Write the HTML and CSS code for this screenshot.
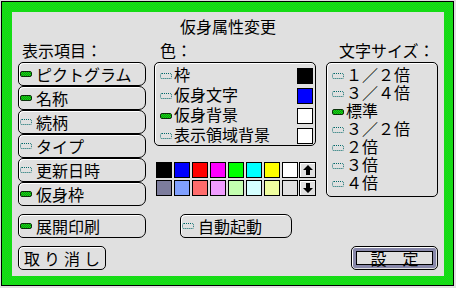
FILE: index.html
```html
<!DOCTYPE html>
<html>
<head>
    <title>仮身属性変更</title>
    <link rel="stylesheet" href="styles.css">
</head>
<body>

    <div class="window">
        <div class="content">
            <div class="title">仮身属性変更</div>
            <div class="columns">

                <div class="col col-left">
                    <div class="heading">表示項目：</div>
                    <div class="switch-stack">
                        <div class="switch"><span class="mark on"></span>ピクトグラム</div>
                        <div class="switch"><span class="mark on"></span>名称</div>
                        <div class="switch"><span class="mark"></span>続柄</div>
                        <div class="switch"><span class="mark"></span>タイプ</div>
                        <div class="switch"><span class="mark"></span>更新日時</div>
                        <div class="switch"><span class="mark on"></span>仮身枠</div>
                    </div>
                    <div class="switch switch-print"><span class="mark on"></span>展開印刷</div>
                    <div class="button button-cancel">取り消し</div>
                </div>

                <div class="col col-mid">
                    <div class="heading">色：</div>
                    <div class="panel color-panel">
                        <div class="color-row"><span class="mark"></span><span class="label">枠</span><span class="swatch" style="background:#000000"></span></div>
                        <div class="color-row"><span class="mark"></span><span class="label">仮身文字</span><span class="swatch" style="background:#0000ff"></span></div>
                        <div class="color-row"><span class="mark on"></span><span class="label">仮身背景</span><span class="swatch" style="background:#ffffff"></span></div>
                        <div class="color-row"><span class="mark"></span><span class="label">表示領域背景</span><span class="swatch" style="background:#ffffff"></span></div>
                    </div>
                    <div class="palette">
                        <span class="chip" style="background:#000000"></span>
                        <span class="chip" style="background:#0000ff"></span>
                        <span class="chip" style="background:#ff0000"></span>
                        <span class="chip" style="background:#ff00ff"></span>
                        <span class="chip" style="background:#00ff00"></span>
                        <span class="chip" style="background:#00ffff"></span>
                        <span class="chip" style="background:#ffff00"></span>
                        <span class="chip" style="background:#ffffff"></span>
                        <span class="arrow">
                            <svg width="14" height="14" viewBox="0 0 14 14"><path d="M7 2 L12 7 L9 7 L9 12 L5 12 L5 7 L2 7 Z" fill="#000"/></svg>
                        </span>
                        <span class="chip" style="background:#7c7c9c"></span>
                        <span class="chip" style="background:#80a0ff"></span>
                        <span class="chip" style="background:#ff6c6c"></span>
                        <span class="chip" style="background:#f09cff"></span>
                        <span class="chip" style="background:#c4ffb0"></span>
                        <span class="chip" style="background:#d4ffff"></span>
                        <span class="chip" style="background:#f0ffa0"></span>
                        <span class="chip" style="background:#e0e0e0"></span>
                        <span class="arrow">
                            <svg width="14" height="14" viewBox="0 0 14 14"><path d="M7 12 L12 7 L9 7 L9 2 L5 2 L5 7 L2 7 Z" fill="#000"/></svg>
                        </span>
                    </div>
                    <div class="switch switch-auto"><span class="mark"></span>自動起動</div>
                </div>

                <div class="col col-right">
                    <div class="heading heading-right">文字サイズ：</div>
                    <div class="panel size-panel">
                        <div class="size-row"><span class="mark"></span>１／２倍</div>
                        <div class="size-row"><span class="mark"></span>３／４倍</div>
                        <div class="size-row"><span class="mark on"></span>標準</div>
                        <div class="size-row"><span class="mark"></span>３／２倍</div>
                        <div class="size-row"><span class="mark"></span>２倍</div>
                        <div class="size-row"><span class="mark"></span>３倍</div>
                        <div class="size-row"><span class="mark"></span>４倍</div>
                    </div>
                    <div class="button button-ok"><span class="button-ok-inner">設　定</span></div>
                </div>

            </div>
        </div>
    </div>

</body>
</html>
```

FILE: styles.css
```css
body {
    margin: 0;
    background-color: #e0e0e0;
    font-family: "Noto Sans CJK JP", "DejaVu Sans", sans-serif;
    font-size: 16px;
    color: #000;
}

.window {
    box-sizing: border-box;
    width: 453px;
    height: 285px;
    margin: 1px 0 0 1px;
    border: 1px solid #000;
    padding: 10px 8px 8px 10px;
    background: repeating-conic-gradient(#00ff00 0 25%, #2cb82c 0 50%) 0 0 / 2px 2px;
}

.content {
    width: 432px;
    height: 264px;
    background-color: #e0e0e0;
}

.title {
    height: 28px;
    line-height: 28px;
    text-align: center;
}

.columns {
    display: flex;
    padding: 0 6px;
}

.col {
    display: flex;
    flex-direction: column;
}

.col-left {
    width: 128px;
}

.col-mid {
    width: 162px;
    margin-left: 8px;
}

.col-right {
    width: 112px;
    margin-left: 10px;
}

.heading {
    height: 20px;
    line-height: 20px;
    padding-left: 4px;
    margin-bottom: 2px;
}

.col-mid .heading {
    padding-left: 6px;
}

.heading-right {
    padding-left: 13px;
}

/* switches */
.switch {
    box-sizing: border-box;
    display: flex;
    align-items: center;
    height: 24px;
    padding-left: 1px;
    border: 1px solid #000;
    border-radius: 5px 7px 7px 5px;
    box-shadow: inset 1px 1px 0 #fff;
    line-height: 22px;
}

.switch .mark {
    margin-right: 4px;
}

.switch-print {
    margin-top: 8px;
}

.switch-auto {
    width: 112px;
    margin-top: 18px;
    margin-left: 26px;
}

.mark {
    box-sizing: border-box;
    display: inline-block;
    flex: none;
    width: 12px;
    height: 6px;
    border: 1px dotted #006868;
    border-radius: 2px;
}

.mark.on {
    border: 1px solid #0a300a;
    background: repeating-conic-gradient(#00ff00 0 25%, #207020 0 50%) 0 0 / 2px 2px;
}

/* buttons */
.button {
    box-sizing: border-box;
    height: 24px;
    border: 1px solid #000;
    border-radius: 5px;
    box-shadow: inset 1px 1px 0 #fff;
    text-align: center;
    line-height: 22px;
}

.button-cancel {
    width: 88px;
    margin-top: 8px;
    letter-spacing: 4px;
    padding-left: 4px;
}

.button-ok {
    width: 87px;
    margin-top: 49px;
    margin-left: 25px;
    padding: 1px;
}

.button-ok-inner {
    box-sizing: border-box;
    display: block;
    height: 20px;
    line-height: 14px;
    border: 3px solid #8888aa;
    border-radius: 2px;
    outline: 1px solid #000;
    outline-offset: -4px;
}

/* panels */
.panel {
    box-sizing: border-box;
    border: 1px solid #000;
    border-radius: 5px;
    box-shadow: inset 1px 1px 0 #fff;
}

.color-panel {
    height: 84px;
    padding: 3px 2px 0 5px;
}

.color-row {
    display: flex;
    align-items: center;
    height: 20px;
    font-family: "Liberation Sans", "Noto Sans CJK JP", sans-serif;
}

.color-row .label {
    flex: 1;
    margin-left: 2px;
    line-height: 20px;
}

.swatch {
    box-sizing: border-box;
    width: 16px;
    height: 16px;
    border: 1px solid #000;
}

.palette {
    display: grid;
    grid-template-columns: repeat(8, 16px) 16px;
    grid-auto-rows: 16px;
    column-gap: 2px;
    row-gap: 2px;
    margin-top: 16px;
    padding-left: 2px;
}

.palette .arrow {
    margin-left: -1px;
}

.chip {
    box-sizing: border-box;
    border: 1px solid #000;
}

.arrow {
    box-sizing: border-box;
    display: flex;
    align-items: center;
    justify-content: center;
    border: 1px solid #000;
    box-shadow: inset 1px 1px 0 #fff;
}

.size-panel {
    height: 135px;
    padding: 4px 0 0 5px;
}

.size-row {
    display: flex;
    align-items: center;
    height: 18px;
    line-height: 18px;
    font-family: "Liberation Sans", "Noto Sans CJK JP", sans-serif;
}

.size-row .mark {
    margin-right: 2px;
}
```
